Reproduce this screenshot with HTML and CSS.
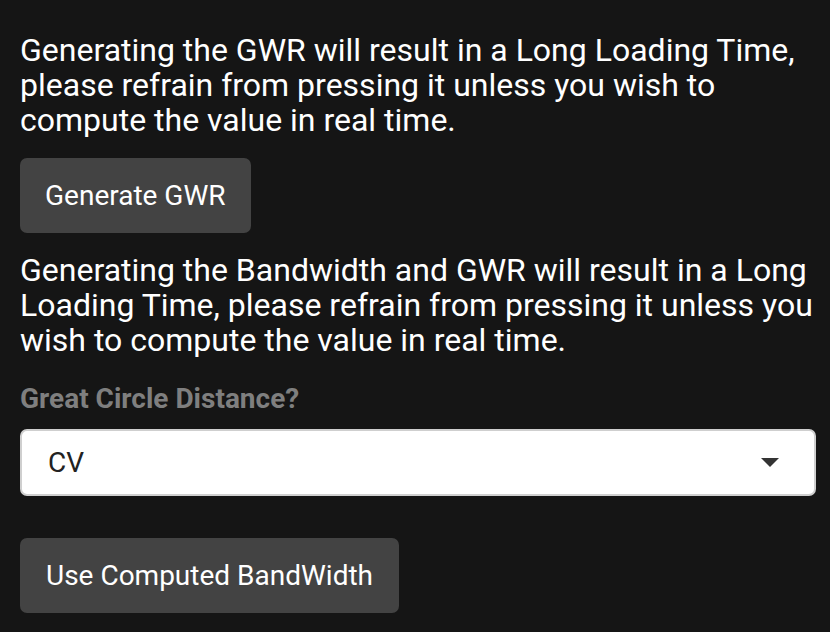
FILE: index.html
```html
<!DOCTYPE html>
<html>
<head>
<meta charset="utf-8">
<link rel="stylesheet" href="styles.css">
</head>
<body>
<div class="panel">
  <p class="note">Generating the GWR will result in a Long Loading Time, please refrain from pressing it unless you wish to compute the value in real time.</p>
  <button class="btn btn-1">Generate GWR</button>
  <p class="note note-2">Generating the Bandwidth and GWR will result in a Long Loading Time, please refrain from pressing it unless you wish to compute the value in real time.</p>
  <label class="field-label">Great Circle Distance?</label>
  <div class="select">
    <span class="select-value">CV</span>
    <svg class="caret" width="20" height="11" viewBox="0 0 20 11"><path d="M1 1 L19 1 L10 10 Z" fill="#333"/></svg>
  </div>
  <button class="btn btn-2">Use Computed BandWidth</button>
</div>
</body>
</html>
```
FILE: styles.css
```css
html, body {
  margin: 0;
  padding: 0;
  background: #151515;
}
body {
  font-family: Roboto, "Liberation Sans", sans-serif;
  color: #ffffff;
}
.panel {
  display: flex;
  flex-direction: column;
  align-items: flex-start;
  padding: 33px 14px 0 20px;
}
.note {
  margin: 0;
  font-size: 32px;
  line-height: 35px;
}
.btn {
  margin-top: 20px;
  height: 75px;
  padding: 0 26px;
  border: none;
  border-radius: 7px;
  background: #434343;
  color: #ffffff;
  font-family: Roboto, "Liberation Sans", sans-serif;
  font-size: 28px;
}
.btn-1 {
  padding: 0 25px;
}
.note-2 {
  margin-top: 20px;
}
.field-label {
  margin-top: 23px;
  font-size: 28px;
  line-height: 35px;
  font-weight: 700;
  color: #7f7f7f;
}
.select {
  margin-top: 13px;
  box-sizing: border-box;
  width: 100%;
  height: 67px;
  display: flex;
  align-items: center;
  justify-content: space-between;
  padding: 0 34px 0 26px;
  background: #ffffff;
  border: 2px solid #cfcfcf;
  border-radius: 7px;
  color: #222;
  font-size: 28px;
}
.caret {
  display: block;
}
.btn-2 {
  margin-top: 42px;
}
```
